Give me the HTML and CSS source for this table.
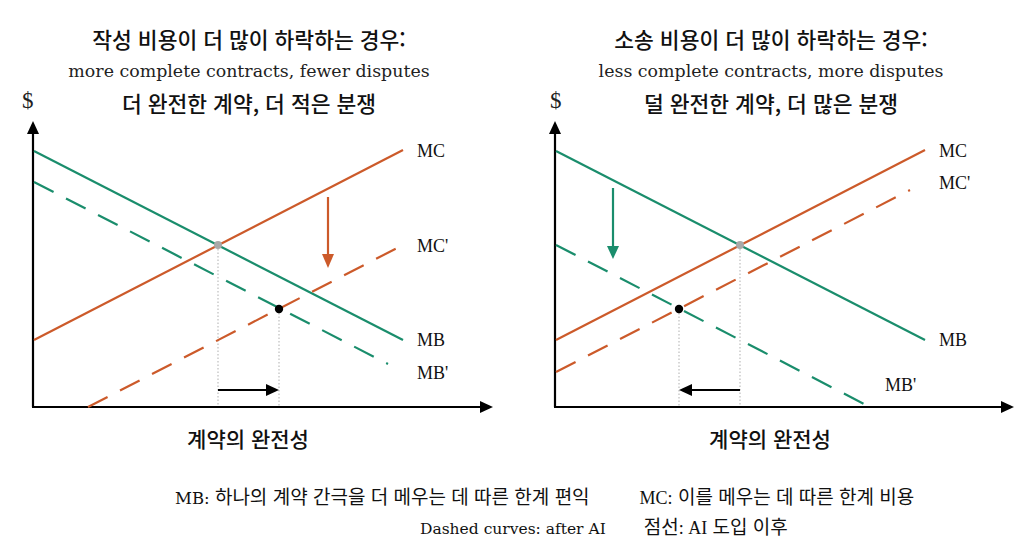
FILE: index.html
```html
<!DOCTYPE html>
<html lang="ko">
<head>
<meta charset="utf-8">
<link rel="stylesheet" href="styles.css">
</head>
<body>
<div class="page">
  <div class="panels">
    <section class="panel panel-left">
      <header class="head">
        <div class="t1">작성 비용이 더 많이 하락하는 경우:</div>
        <div class="t2">more complete contracts, fewer disputes</div>
        <div class="t3row"><span class="dollar">$</span><span class="t3">더 완전한 계약, 더 적은 분쟁</span><span></span></div>
      </header>
      <svg class="chart" width="512" height="297" viewBox="0 119 512 297">
        <line class="ax" x1="33" y1="407" x2="33" y2="130"/>
        <polygon points="33,121 27,134 39,134"/>
        <line class="ax" x1="32" y1="407" x2="482" y2="407"/>
        <polygon points="493,407 480,401 480,413"/>
        <line class="dot-v" x1="218" y1="249" x2="218" y2="406"/>
        <line class="dot-v" x1="279" y1="313" x2="279" y2="406"/>
        <line class="g" x1="34" y1="151" x2="403" y2="340"/>
        <line class="o" x1="34" y1="340" x2="403" y2="150"/>
        <line class="g dash" x1="34" y1="182" x2="388" y2="364"/>
        <line class="o dash" x1="88" y1="407" x2="401" y2="246"/>
        <circle cx="218" cy="245" r="4" fill="#a9a9a9"/>
        <circle cx="279" cy="309" r="4.2" fill="#000"/>
        <line class="ar" x1="218" y1="390" x2="268" y2="390"/>
        <polygon points="279,390 266,384 266,396"/>
        <line class="o" x1="328" y1="197" x2="328" y2="256"/>
        <polygon class="ofill" points="328,268 322,254 334,254"/>
        <text class="lbl" x="417" y="157">MC</text>
        <text class="lbl" x="417" y="252">MC'</text>
        <text class="lbl" x="417" y="346">MB</text>
        <text class="lbl" x="417" y="379">MB'</text>
      </svg>
      <div class="xlabel">계약의 완전성</div>
    </section>
    <section class="panel panel-right">
      <header class="head">
        <div class="t1">소송 비용이 더 많이 하락하는 경우:</div>
        <div class="t2">less complete contracts, more disputes</div>
        <div class="t3row"><span class="dollar">$</span><span class="t3">덜 완전한 계약, 더 많은 분쟁</span><span></span></div>
      </header>
      <svg class="chart" width="512" height="297" viewBox="512 119 512 297">
        <line class="ax" x1="555" y1="407" x2="555" y2="130"/>
        <polygon points="555,121 549,134 561,134"/>
        <line class="ax" x1="554" y1="407" x2="1003" y2="407"/>
        <polygon points="1014,407 1001,401 1001,413"/>
        <line class="dot-v" x1="740" y1="249" x2="740" y2="406"/>
        <line class="dot-v" x1="679" y1="313" x2="679" y2="406"/>
        <line class="g" x1="556" y1="151" x2="925" y2="340"/>
        <line class="o" x1="556" y1="340" x2="925" y2="150"/>
        <line class="g dash" x1="556" y1="245" x2="868" y2="406"/>
        <line class="o dash" x1="556" y1="372" x2="910" y2="190"/>
        <circle cx="740" cy="245" r="4" fill="#a9a9a9"/>
        <circle cx="679" cy="309" r="4.2" fill="#000"/>
        <line class="ar" x1="740" y1="390" x2="690" y2="390"/>
        <polygon points="679,390 692,384 692,396"/>
        <line class="g" x1="613" y1="188" x2="613" y2="248"/>
        <polygon class="gfill" points="613,259 607,246 619,246"/>
        <text class="lbl" x="939" y="157">MC</text>
        <text class="lbl" x="939" y="189">MC'</text>
        <text class="lbl" x="939" y="346">MB</text>
        <text class="lbl" x="885" y="391">MB'</text>
      </svg>
      <div class="xlabel">계약의 완전성</div>
    </section>
  </div>
  <footer class="legend">
    <div class="leg-row leg-row1">
      <span class="leg"><span class="en">MB:</span> 하나의 계약 간극을 더 메우는 데 따른 한계 편익</span>
      <span class="leg"><span class="en2">MC:</span> 이를 메우는 데 따른 한계 비용</span>
    </div>
    <div class="leg-row leg-row2">
      <span class="leg"><span class="en">Dashed curves: after AI</span></span>
      <span class="leg">점선<span class="en2">: AI</span> 도입 이후</span>
    </div>
  </footer>
</div>
</body>
</html>
```

FILE: styles.css
```css
* { box-sizing: border-box; }
html, body { margin: 0; padding: 0; background: #fff; }
body {
  width: 1024px;
  height: 550px;
  overflow: hidden;
  color: #111;
  font-family: "Noto Sans CJK KR", "Noto Sans", sans-serif;
}
.page { width: 1024px; }
.panels { display: flex; }
.panel { width: 512px; display: flex; flex-direction: column; }
.head { padding-top: 23px; text-align: center; }
.panel-left .head { padding-right: 14px; }
.panel-right .head { padding-left: 6px; }
.t1, .t3 {
  font-size: 21.5px;
  font-weight: 500;
  line-height: 32px;
}
.t2 {
  font-family: "DejaVu Serif", "Liberation Serif", serif;
  font-size: 17.4px;
  line-height: 32px;
  color: #222;
}
.t3row {
  display: grid;
  grid-template-columns: 1fr auto 1fr;
  align-items: center;
  line-height: 32px;
}
.dollar {
  justify-self: start;
  font-family: "Liberation Serif", serif;
  font-size: 23px;
  font-weight: 400;
  color: #222;
  margin-top: -4px;
}
.panel-left .dollar { padding-left: 22px; }
.panel-right .dollar { padding-left: 32px; }
.chart { display: block; }
.xlabel {
  font-size: 21px;
  font-weight: 500;
  line-height: 44px;
  text-align: center;
}
.panel-left .xlabel { padding-right: 16px; }
.panel-right .xlabel { padding-left: 4px; }

.ax { stroke: #000; stroke-width: 2.2; }
.ar { stroke: #000; stroke-width: 2; }
.g { stroke: #1a8d6c; stroke-width: 2.2; }
.o { stroke: #cc5a2a; stroke-width: 2.2; }
.dash { stroke-dasharray: 22 14; }
.dot-v { stroke: #bdbdbd; stroke-width: 1.2; stroke-dasharray: 1.5 2; }
.ofill { fill: #cc5a2a; }
.gfill { fill: #1a8d6c; }
.lbl {
  font-family: "Liberation Serif", serif;
  font-size: 18px;
  fill: #111;
}

.legend { padding-top: 21px; }
.leg-row { display: flex; line-height: 30px; font-size: 19px; }
.leg-row1 { padding-left: 175px; gap: 50px; }
.leg-row2 { padding-left: 420px; gap: 38px; margin-top: -3px; }
.en { font-family: "DejaVu Serif", "Liberation Serif", serif; font-size: 15.5px; }
.leg-row1 .en { font-size: 16.5px; }
.en2 { font-family: "Liberation Serif", serif; font-size: 18px; }
```
